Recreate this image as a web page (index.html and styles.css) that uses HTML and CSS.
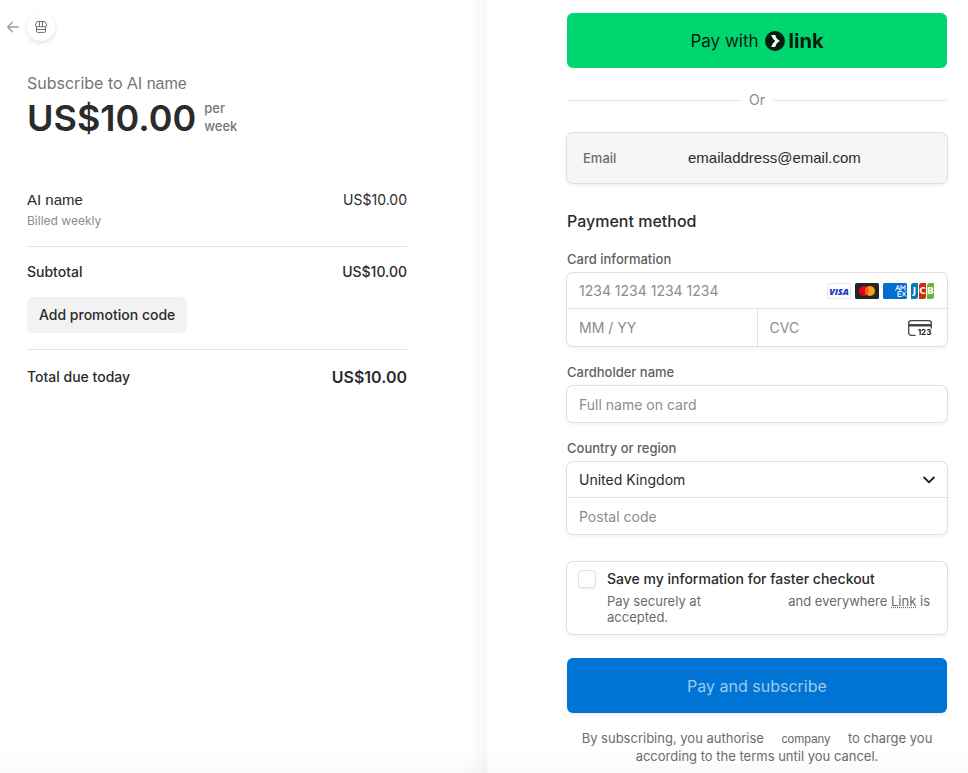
FILE: index.html
```html
<!DOCTYPE html>
<html lang="en">
<head>
  <meta charset="UTF-8" />
  <meta name="viewport" content="width=device-width, initial-scale=1.0" />
  <title>Checkout</title>
  <link rel="stylesheet" href="styles.css">
</head>
<body>
  <div class="checkout">
    <section class="summary">
      <header class="merchant">
        <a href="#" class="back" aria-label="Back">
          <svg width="12" height="12" viewBox="0 0 12 12" fill="none" stroke="#a0a0a0" stroke-width="1.5" stroke-linecap="round" stroke-linejoin="round"><path d="M11.3 6H1M5.3 1.3L.8 6l4.5 4.7"/></svg>
        </a>
        <span class="merchant-icon">
          <svg width="12" height="12" viewBox="0 0 12 12" fill="none" stroke="#6b6b6b"><path d="M2 .6h8l1.400 2.400v1.500a1.200 1.200 0 0 1-1.200 1.200H1.800A1.200 1.200 0 0 1 .6 4.500V3z"/><path d="M4.500.6v5M7.500.6v5M1.500 5.800v4.400a1.200 1.200 0 0 0 1.200 1.200h6.600a1.200 1.200 0 0 0 1.200-1.200V5.800M1.500 8.500h9"/></svg>
        </span>
      </header>

      <p class="product">Subscribe to <span class="name">AI name</span></p>
      <div class="price">
        <h1>US$10.00</h1>
        <span class="period">per<br>week</span>
      </div>

      <div class="item">
        <div class="row">
          <span class="name">AI name</span>
          <span>US$10.00</span>
        </div>
        <p class="billed">Billed weekly</p>
      </div>
      <div class="subtotal">
        <div class="row medium">
          <span>Subtotal</span>
          <span>US$10.00</span>
        </div>
        <button type="button" class="promo">Add promotion code</button>
      </div>
      <div class="row medium total">
        <span>Total due today</span>
        <span class="total-price">US$10.00</span>
      </div>
    </section>

    <main class="payment">
      <button type="button" class="link-button">
        Pay with
        <span class="link-logo">
          <svg width="20" height="20" viewBox="0 0 20 20"><circle cx="10" cy="10" r="10" fill="#011e0f"/><path d="M6.200 4h4c.7 2.800 2.500 4.900 4.800 6-2.300 1.100-4.100 3.200-4.800 6h-4c.9-2.600 2.300-4.500 4.100-6C8.500 8.500 7.100 6.600 6.200 4z" fill="#fff"/></svg>
          link
        </span>
      </button>

      <div class="divider">Or</div>

      <form class="payment-form">
        <div class="box email-box">
          <label for="email">Email</label>
          <input type="email" id="email" value="emailaddress@email.com" readonly>
        </div>

        <h2>Payment method</h2>

        <label class="label" for="card">Card information</label>
        <div class="box">
          <div class="field">
            <input type="text" id="card" placeholder="1234 1234 1234 1234">
            <span class="cards">
              <svg width="24" height="16" viewBox="0 0 24 16"><rect x=".5" y=".5" width="23" height="15" rx="1.500" fill="#fff" stroke="#e8e8e8"/><text x="12" y="11.500" text-anchor="middle" class="visa-text">VISA</text></svg>
              <svg width="24" height="16" viewBox="0 0 24 16"><rect width="24" height="16" rx="1.500" fill="#252525"/><circle cx="9" cy="8" r="5" fill="#eb001b"/><circle cx="15" cy="8" r="5" fill="#f79e1b"/><path d="M12 4a5 5 0 0 1 0 8 5 5 0 0 1 0-8z" fill="#ff5f00"/></svg>
              <svg width="24" height="16" viewBox="0 0 24 16"><rect width="24" height="16" rx="1.500" fill="#016fd0"/><path d="M12.500 7.500l2.300-5 2.300 5M13.500 5.800h2.600M18 7.500v-5l2 3 2-3v5M15 13.500v-5h3.500M15 11h3M15 13.500h3.500M19 8.500l4 5M23 8.500l-4 5" fill="none" stroke="#fff"/></svg>
              <svg width="24" height="16" viewBox="0 0 24 16"><path d="M2.500 0H7v13.500A2.500 2.500 0 0 1 4.500 16H0V2.500A2.500 2.500 0 0 1 2.500 0z" fill="#047ab1"/><path d="M10.500 0H15v13.500a2.500 2.500 0 0 1-2.500 2.500H8V2.500A2.500 2.500 0 0 1 10.500 0z" fill="#d42d06"/><path d="M18.500 0H23v13.500a2.500 2.500 0 0 1-2.500 2.500H16V2.500A2.500 2.500 0 0 1 18.500 0z" fill="#67b637"/><g class="jcb-text"><text x="3.500" y="11" text-anchor="middle">J</text><text x="11.500" y="11" text-anchor="middle">C</text><text x="19.500" y="11" text-anchor="middle">B</text></g></svg>
            </span>
          </div>
          <div class="split">
            <div class="field">
              <input type="text" placeholder="MM / YY" aria-label="Expiration">
            </div>
            <div class="field">
              <input type="text" placeholder="CVC" aria-label="CVC">
              <svg class="cvc-icon" width="24" height="18" viewBox="0 0 24 18"><path d="M7.500 16.300H3.200A2.500 2.500 0 0 1 .7 13.800V4.200A2.500 2.500 0 0 1 3.200 1.700h17.600a2.500 2.500 0 0 1 2.500 2.500V9.500" fill="none" stroke="#444" stroke-width="1.300"/><path d="M.7 5h22.600v2.500H.7z" fill="#444"/><text x="16.500" y="16" text-anchor="middle" class="cvc-text">123</text></svg>
            </div>
          </div>
        </div>

        <label class="label" for="cardholder">Cardholder name</label>
        <div class="box">
          <div class="field">
            <input type="text" id="cardholder" placeholder="Full name on card">
          </div>
        </div>

        <label class="label" for="country">Country or region</label>
        <div class="box">
          <div class="field">
            <select id="country">
              <option>United Kingdom</option>
            </select>
            <svg class="chevron" width="12" height="12" viewBox="0 0 12 12" fill="none" stroke="#1a1a1a" stroke-width="1.800" stroke-linecap="round" stroke-linejoin="round"><path d="M1.200 3.500L6 8.300l4.800-4.800"/></svg>
          </div>
          <div class="field">
            <input type="text" placeholder="Postal code" aria-label="Postal code">
          </div>
        </div>

        <div class="box save-box">
          <input type="checkbox" id="save">
          <div>
            <label for="save">Save my information for faster checkout</label>
            <p>Pay securely at <span class="merchant-gap"></span> and everywhere <a href="#">Link</a> is accepted.</p>
          </div>
        </div>

        <button type="submit" class="submit">Pay and subscribe</button>
        <p class="terms">By subscribing, you authorise <span class="company">company</span> to charge you according to the terms until you cancel.</p>
      </form>
    </main>
  </div>
</body>
</html>
```
FILE: styles.css
```css
* {
  box-sizing: border-box;
}

body {
  margin: 0;
  font-family: Inter, sans-serif;
  font-size: 14px;
  line-height: 20px;
  color: #2b2b2b;
  background: #fff;
}

h1, h2, p {
  margin: 0;
}

button, input, select {
  font: inherit;
  color: inherit;
}

button {
  border: none;
  border-radius: 6px;
  cursor: pointer;
}

.checkout {
  display: flex;
  min-height: 100vh;
  background: linear-gradient(to top, #f9f9f9, #fff 20px);
}

.summary, .payment {
  box-sizing: content-box;
  flex: 1 1 0;
  min-width: 0;
}

/* left side */

.summary {
  padding: 13px 80px 0 27px;
  background: linear-gradient(to left, rgba(0,0,0,0.03), rgba(0,0,0,0) 20px);
}

.merchant {
  display: flex;
  align-items: center;
  gap: 8px;
  margin-left: -20px;
}

.back {
  display: flex;
}

.merchant-icon {
  display: flex;
  align-items: center;
  justify-content: center;
  width: 28px;
  height: 28px;
  border-radius: 50%;
  background: #fff;
  box-shadow: 0 2px 5px rgba(0,0,0,0.12);
}

.name, .company, #email {
  font-family: "Liberation Sans", Arial, sans-serif;
}

.product {
  margin-top: 32px;
  font-size: 16px;
  color: #767676;
}

.product .name {
  font-size: 16px;
}

.price {
  display: flex;
  align-items: center;
  gap: 8px;
}

.price h1 {
  font-size: 36px;
  line-height: 48px;
  font-weight: 600;
}

.period {
  padding-bottom: 2px;
  font-size: 13px;
  font-weight: 500;
  line-height: 18px;
  color: #767676;
}

.row {
  display: flex;
  justify-content: space-between;
}

.item {
  margin-top: 48px;
  padding-bottom: 15px;
  border-bottom: 1px solid #e4e4e4;
}

.item .name {
  font-size: 15px;
}

.billed {
  margin-top: 1px;
  font-size: 12px;
  color: #8c8c8c;
}

.medium {
  font-weight: 500;
}

.subtotal {
  padding: 15px 0 16px;
  border-bottom: 1px solid #e4e4e4;
}

.promo {
  margin-top: 15px;
  padding: 8px 12px;
  font-weight: 500;
  background: #f2f2f2;
}

.total {
  margin-top: 17px;
}

.total-price {
  font-size: 16px;
  font-weight: 600;
}

/* right side */

.payment {
  padding: 13px 21px 8px 80px;
}

.link-button {
  display: flex;
  align-items: center;
  justify-content: center;
  gap: 6px;
  width: 100%;
  height: 55px;
  font-size: 17px;
  color: #011e0f;
  background: #00d66f;
}

.link-logo {
  display: flex;
  align-items: center;
  gap: 4px;
  font-size: 20px;
  font-weight: 700;
}

.divider {
  display: flex;
  align-items: center;
  gap: 8px;
  margin: 22px 0 23px;
  color: #8c8c8c;
}

.divider::before, .divider::after {
  content: "";
  flex: 1;
  height: 1px;
  background: #e4e4e4;
}

.box {
  border-radius: 6px;
  background: #fff;
  box-shadow: 0 0 0 1px #e0e0e0, 0 2px 4px rgba(0,0,0,0.08);
}

.email-box {
  display: flex;
  align-items: center;
  height: 50px;
  padding: 0 16px;
  background: #f6f6f6;
}

.email-box label {
  flex: 0 0 105px;
  font-size: 13px;
  font-weight: 500;
  color: #6b6b6b;
}

#email {
  flex: 1;
  min-width: 0;
  padding: 0;
  border: none;
  font-size: 15px;
  background: none;
}

h2 {
  margin-top: 26px;
  font-size: 16px;
  line-height: 24px;
  font-weight: 500;
}

.label {
  display: block;
  margin: 18px 0 5px;
  font-size: 13px;
  line-height: 17px;
  font-weight: 500;
  color: #5f5f5f;
}

.field {
  position: relative;
  display: flex;
  align-items: center;
  flex: 1;
  height: 36px;
  min-width: 0;
}

.box > .field:not(:last-child) {
  height: 35px;
}

.field + .field, .split .field {
  height: 37px;
}

.field input, .field select {
  width: 100%;
  height: 100%;
  padding: 0 12px;
  border: none;
  border-radius: 6px;
  background: none;
  appearance: none;
}

.field input::placeholder {
  color: #8c8c8c;
  opacity: 1;
}

.field + .field, .split {
  border-top: 1px solid #e0e0e0;
}

.split {
  display: flex;
}

.split .field + .field {
  border-top: none;
  border-left: 1px solid #e0e0e0;
}

.cards {
  position: absolute;
  right: 12px;
  display: flex;
  gap: 4px;
}

.visa-text {
  font: italic 800 9px "Open Sans", sans-serif;
  fill: #1434cb;
}

.jcb-text {
  font: 700 9px "DejaVu Sans", sans-serif;
  fill: #fff;
}

.cvc-icon {
  position: absolute;
  right: 15px;
}

.cvc-text {
  font: 700 8px Inter, sans-serif;
  fill: #1a1a1a;
}

.chevron {
  position: absolute;
  right: 12px;
  pointer-events: none;
}

.save-box {
  display: flex;
  gap: 11px;
  margin-top: 28px;
  padding: 7px 12px 9px 11px;
}

.save-box input {
  flex: none;
  width: 18px;
  height: 18px;
  margin: 1px 0 0;
  appearance: none;
  border: 1px solid #e0e0e0;
  border-radius: 4px;
  box-shadow: 0 1px 2px rgba(0,0,0,0.08);
}

.save-box input:checked {
  background: #0074d4;
}

.save-box label {
  font-weight: 500;
}

.save-box p {
  margin-top: 4px;
  font-size: 13px;
  line-height: 16px;
  color: #6b6b6b;
}

.merchant-gap {
  display: inline-block;
  width: 80px;
}

.save-box a {
  color: inherit;
  text-decoration: underline dotted;
}

.submit {
  display: block;
  width: 100%;
  height: 55px;
  margin-top: 24px;
  font-size: 16px;
  color: #9cc9ee;
  background: #0074d4;
  box-shadow: 0 2px 4px rgba(0,0,0,0.08);
}

.terms {
  margin-top: 17px;
  font-size: 13px;
  line-height: 17px;
  text-align: center;
  color: #6b6b6b;
}

.company {
  padding: 0 14px;
  font-size: 12px;
}
```
